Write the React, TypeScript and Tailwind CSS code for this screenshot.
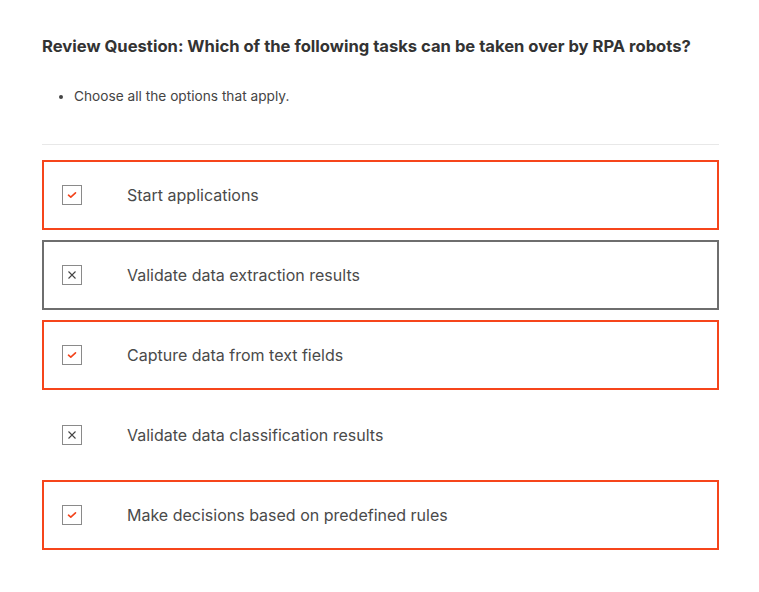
const options = [
  { label: 'Start applications', correct: true, state: 'right' },
  { label: 'Validate data extraction results', correct: false, state: 'wrong' },
  { label: 'Capture data from text fields', correct: true, state: 'right' },
  { label: 'Validate data classification results', correct: false, state: 'none' },
  { label: 'Make decisions based on predefined rules', correct: true, state: 'right' },
]

function Mark({ correct }: { correct: boolean }) {
  return (
    <div className="w-5 h-5 border border-[#8a8a8a] flex items-center justify-center shrink-0">
      {correct ? (
        <svg width="10" height="8" viewBox="0 0 10 8" fill="none">
          <path d="M1.5 4.2 L3.8 6.2 L8.5 1.8" stroke="#f2441c" strokeWidth="1.6" strokeLinecap="round" strokeLinejoin="round" />
        </svg>
      ) : (
        <svg width="10" height="10" viewBox="0 0 10 10" fill="none">
          <path d="M1.5 1.5 L8.5 8.5 M8.5 1.5 L1.5 8.5" stroke="#444" strokeWidth="1.1" />
        </svg>
      )}
    </div>
  )
}

export default function App() {
  return (
    <div className="min-h-screen bg-white font-['Inter','Liberation_Sans',sans-serif]">
      <div className="w-[677px] ml-[42px] pt-[35px]">
        <h1 className="text-[16.6px] leading-[22px] font-bold text-[#333333]">
          Review Question: Which of the following tasks can be taken over by RPA robots?
        </h1>
        <ul className="mt-[29px] pl-[32px] list-disc text-[13.7px] leading-[20px] text-[#444444] marker:text-[#444444]">
          <li>Choose all the options that apply.</li>
        </ul>
        <div className="mt-[38px] h-px bg-[#e8e8e8]" />
        <div className="mt-[15px] flex flex-col gap-[10px]">
          {options.map((o) => (
            <div
              key={o.label}
              className={`h-[70px] flex items-center pl-[18px] border-2 ${
                o.state === 'right'
                  ? 'border-[#f6451b]'
                  : o.state === 'wrong'
                  ? 'border-[#6e6e6e]'
                  : 'border-transparent'
              }`}
            >
              <Mark correct={o.correct} />
              <span className="ml-[45px] text-[16px] text-[#4a4a4a]">{o.label}</span>
            </div>
          ))}
        </div>
      </div>
    </div>
  )
}
